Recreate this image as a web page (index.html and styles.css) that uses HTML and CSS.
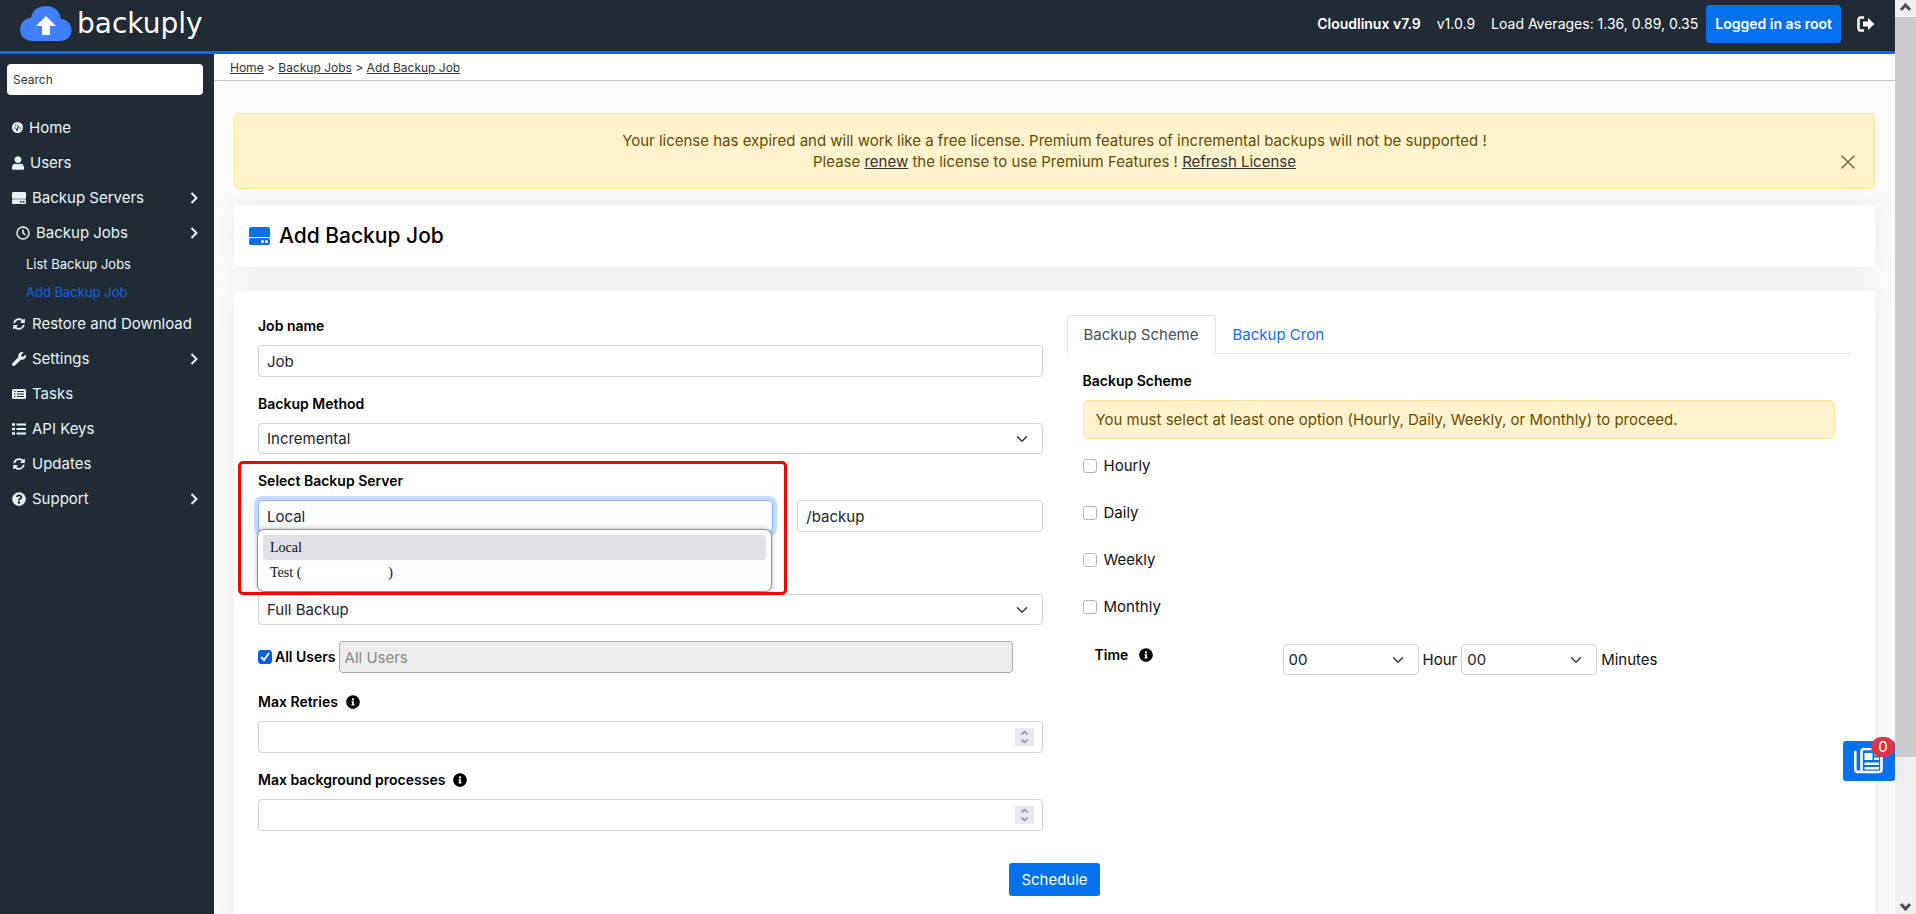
FILE: index.html
```html
<!DOCTYPE html>
<html lang="en">
<head>
  <meta charset="UTF-8">
  <meta name="viewport" content="width=device-width, initial-scale=1.0">
  <title>Backuply - Add Backup Job</title>
  <link rel="stylesheet" href="styles.css">
</head>
<body>
  <!-- shared icons -->
  <svg class="sprite" aria-hidden="true">
    <symbol id="i-sync" viewBox="0 0 512 512"><path d="M370.72 133.28C339.458 104.008 298.888 87.962 255.848 88c-77.458.068-144.328 53.178-162.791 126.85-1.344 5.363-6.122 9.15-11.651 9.15H24.103c-7.498 0-13.194-6.807-11.807-14.176C33.933 94.924 134.813 8 256 8c66.448 0 126.791 26.136 171.315 68.685L463.03 40.97C478.149 25.851 504 36.559 504 57.941V192c0 13.255-10.745 24-24 24H345.941c-21.382 0-32.09-25.851-16.971-40.971l41.75-41.749zM32 296h134.059c21.382 0 32.09 25.851 16.971 40.971l-41.75 41.75c31.262 29.273 71.835 45.319 114.876 45.28 77.418-.07 144.315-53.144 162.787-126.849 1.344-5.363 6.122-9.15 11.651-9.15h57.304c7.498 0 13.194 6.807 11.807 14.176C478.067 417.076 377.187 504 256 504c-66.448 0-126.791-26.136-171.315-68.685L48.97 471.03C33.851 486.149 8 475.441 8 454.059V320c0-13.255 10.745-24 24-24z"/></symbol>
    <symbol id="i-info" viewBox="0 0 512 512"><path d="M256 8C119.043 8 8 119.083 8 256c0 136.997 111.043 248 248 248s248-111.003 248-248C504 119.083 392.957 8 256 8zm0 110c23.196 0 42 18.804 42 42s-18.804 42-42 42-42-18.804-42-42 18.804-42 42-42zm56 254c0 6.627-5.373 12-12 12h-88c-6.627 0-12-5.373-12-12v-24c0-6.627 5.373-12 12-12h12v-64h-12c-6.627 0-12-5.373-12-12v-24c0-6.627 5.373-12 12-12h64c6.627 0 12 5.373 12 12v100h12c6.627 0 12 5.373 12 12v24z"/></symbol>
    <symbol id="i-hdd" viewBox="0 0 21 18"><path fill-rule="evenodd" d="M2 0h17a2 2 0 0 1 2 2v8H0V2a2 2 0 0 1 2-2zM2 11h17a2 2 0 0 1 2 2v3a2 2 0 0 1-2 2H2a2 2 0 0 1-2-2v-3a2 2 0 0 1 2-2zM13.500 13a1.500 1.500 0 1 0 0 3 1.500 1.500 0 0 0 0-3zM17.500 13a1.500 1.500 0 1 0 0 3 1.500 1.500 0 0 0 0-3z"/></symbol>
    <symbol id="i-chevron" viewBox="0 0 8 12"><path d="M1.500 1l5 5-5 5" fill="none" stroke="currentColor" stroke-width="2"/></symbol>
    <symbol id="i-spin" viewBox="0 0 19 18"><path d="M6.500 6.500l3-3 3 3M6.500 11.500l3 3 3-3" fill="none" stroke="#8f8f9d" stroke-width="1.500"/></symbol>
  </svg>

  <div class="window">
    <div class="app">
      <header class="topbar">
        <a class="brand" href="#">
          <svg width="52" height="36" viewBox="0 0 52 36" aria-hidden="true">
            <path fill="#4080ff" d="M12 35a11.500 11.500 0 0 1-1-23C12 4 19 0 26 0c8 0 14 5 15 13a11 11 0 0 1-1 22z"/>
            <path fill="#fff" d="M26 10l10 10h-6v9h-8v-9h-6z"/>
          </svg>
          <span>backuply</span>
        </a>
        <div class="status">
          <strong>Cloudlinux v7.9</strong>
          <span>v1.0.9</span>
          <span>Load Averages: 1.36, 0.89, 0.35</span>
        </div>
        <button type="button" class="btn user-btn">Logged in as root</button>
        <a class="logout" href="#" aria-label="Logout">
          <svg width="18" height="16" viewBox="0 0 18 16"><path d="M7 1.500H3.500a2 2 0 0 0-2 2v9a2 2 0 0 0 2 2H7" fill="none" stroke="currentColor" stroke-width="2.500"/><path fill="currentColor" d="M6 5.500h5V2l6.500 6L11 14v-3.500H6z"/></svg>
        </a>
      </header>

      <div class="body">
        <nav class="sidebar">
          <input class="search" type="text" placeholder="Search" aria-label="Search">
          <ul class="menu">
            <li><a href="#"><svg width="11" height="11" viewBox="0 0 12 12"><circle cx="6" cy="6" r="6"/><path d="M5.500 9l1.500-5" stroke="#212b36" stroke-width="1.300"/><g fill="#212b36"><circle cx="3" cy="6.500" r=".8"/><circle cx="4" cy="3.500" r=".8"/><circle cx="9" cy="6.500" r=".8"/><circle cx="5.500" cy="8.500" r="1.200"/></g></svg>Home</a></li>
            <li><a href="#"><svg width="12" height="14" viewBox="0 0 448 512"><path d="M224 256c70.7 0 128-57.3 128-128S294.7 0 224 0 96 57.3 96 128s57.3 128 128 128zm89.6 32h-16.7c-22.2 10.2-46.9 16-72.9 16s-50.6-5.8-72.9-16h-16.7C60.2 288 0 348.2 0 422.4V464c0 26.5 21.5 48 48 48h352c26.5 0 48-21.5 48-48v-41.6c0-74.2-60.2-134.4-134.4-134.4z"/></svg>Users</a></li>
            <li><a href="#"><svg width="14" height="12"><use href="#i-hdd"/></svg>Backup Servers<svg class="arrow" width="8" height="12"><use href="#i-chevron"/></svg></a></li>
            <li>
              <a class="open" href="#"><svg width="14" height="14" viewBox="0 0 14 14"><circle cx="7" cy="7" r="6" fill="none" stroke="currentColor" stroke-width="1.500"/><path d="M7 3.500V7l2.500 2" fill="none" stroke="currentColor" stroke-width="1.500"/></svg>Backup Jobs<svg class="arrow" width="8" height="12"><use href="#i-chevron"/></svg></a>
              <ul class="submenu">
                <li><a href="#">List Backup Jobs</a></li>
                <li><a class="active" href="#">Add Backup Job</a></li>
              </ul>
            </li>
            <li><a href="#"><svg width="14" height="12"><use href="#i-sync"/></svg>Restore and Download</a></li>
            <li><a href="#"><svg width="14" height="14" viewBox="0 0 512 512"><path d="M507.73 109.1c-2.24-9.03-13.54-12.09-20.12-5.51l-74.36 74.36-67.88-11.31-11.31-67.88 74.36-74.36c6.62-6.62 3.43-17.9-5.66-20.16-47.38-11.74-99.55.91-136.58 37.93-39.64 39.64-50.55 97.1-34.05 147.2L18.74 402.76c-24.99 24.99-24.99 65.51 0 90.5 24.99 24.99 65.51 24.99 90.5 0l213.21-213.21c50.12 16.71 107.47 5.68 147.37-34.22 37.07-37.07 49.7-89.32 37.91-136.73z"/></svg>Settings<svg class="arrow" width="8" height="12"><use href="#i-chevron"/></svg></a></li>
            <li><a href="#"><svg width="14" height="10" viewBox="0 0 14 10"><rect width="14" height="10" rx="1.500"/><path d="M2 2.500h1.500M5 2.500h7M2 5h1.500M5 5h7M2 7.500h1.500M5 7.500h7" stroke="#212b36" stroke-width="1"/></svg>Tasks</a></li>
            <li><a href="#"><svg width="14" height="12" viewBox="0 0 14 12"><path d="M0 1.500h3M0 6h3M0 10.500h3" stroke="currentColor" stroke-width="2.500"/><path d="M4.500 1.500H14M4.500 6H14M4.500 10.500H14" stroke="currentColor" stroke-width="1.800"/></svg>API Keys</a></li>
            <li><a href="#"><svg width="14" height="12"><use href="#i-sync"/></svg>Updates</a></li>
            <li><a href="#"><svg width="14" height="14" viewBox="0 0 512 512"><path d="M504 256c0 136.997-111.043 248-248 248S8 392.997 8 256C8 119.083 119.043 8 256 8s248 111.083 248 248zM262.655 90c-54.497 0-89.255 22.957-116.549 63.758-3.536 5.286-2.353 12.415 2.715 16.258l34.699 26.31c5.205 3.947 12.621 3.008 16.665-2.122 17.864-22.658 30.113-35.797 57.303-35.797 20.429 0 45.698 13.148 45.698 32.958 0 14.976-12.363 22.667-32.534 33.976C247.128 238.528 216 254.941 216 296v4c0 6.627 5.373 12 12 12h56c6.627 0 12-5.373 12-12v-1.333c0-28.462 83.186-29.647 83.186-106.667 0-58.002-60.165-102-116.531-102zM256 338c-25.365 0-46 20.635-46 46 0 25.364 20.635 46 46 46s46-20.636 46-46c0-25.365-20.635-46-46-46z"/></svg>Support<svg class="arrow" width="8" height="12"><use href="#i-chevron"/></svg></a></li>
          </ul>
        </nav>

        <main>
          <div class="breadcrumb"><a href="#">Home</a> &gt; <a href="#">Backup Jobs</a> &gt; <a href="#">Add Backup Job</a></div>

          <div class="content">
            <div class="alert license">
              <p>Your license has expired and will work like a free license. Premium features of incremental backups will not be supported !<br>
              Please <a href="#">renew</a> the license to use Premium Features ! <a href="#">Refresh License</a></p>
              <button type="button" class="close" aria-label="Close"><svg width="14" height="14" viewBox="0 0 14 14"><path d="M1 1l12 12M13 1L1 13" stroke="currentColor" stroke-width="1.500" stroke-linecap="round"/></svg></button>
            </div>

            <div class="card title">
              <svg width="21" height="18"><use href="#i-hdd"/></svg>
              <h1>Add Backup Job</h1>
            </div>

            <form class="card">
              <div class="columns">
                <div class="job">
                  <div class="field">
                    <label for="name">Job name</label>
                    <input class="control" type="text" id="name" value="Job">
                  </div>
                  <div class="field">
                    <label for="method">Backup Method</label>
                    <select class="control" id="method"><option>Incremental</option><option>Full</option></select>
                  </div>
                  <div class="server-row">
                    <div class="server">
                      <label for="server">Select Backup Server</label>
                      <input class="control focused" type="text" id="server" value="Local">
                      <ul class="options">
                        <li class="selected">Local</li>
                        <li>Test (<span class="masked"></span>)</li>
                      </ul>
                      <div class="marker"></div>
                    </div>
                    <input class="control" type="text" value="/backup" aria-label="Backup path">
                  </div>
                  <select class="control" aria-label="Backup type"><option>Full Backup</option></select>
                  <div class="users">
                    <input type="checkbox" id="allusers" checked>
                    <label for="allusers">All Users</label>
                    <input class="control" type="text" placeholder="All Users" aria-label="Users" disabled>
                  </div>
                  <div class="field">
                    <label for="retries">Max Retries <svg width="14" height="14"><use href="#i-info"/></svg></label>
                    <div class="number"><input class="control" type="number" id="retries"><svg width="19" height="18"><use href="#i-spin"/></svg></div>
                  </div>
                  <div class="field">
                    <label for="procs">Max background processes <svg width="14" height="14"><use href="#i-info"/></svg></label>
                    <div class="number"><input class="control" type="number" id="procs"><svg width="19" height="18"><use href="#i-spin"/></svg></div>
                  </div>
                </div>

                <div class="schedule">
                  <div class="tabs">
                    <button type="button" class="active">Backup Scheme</button>
                    <button type="button">Backup Cron</button>
                  </div>
                  <div class="scheme">
                    <h2>Backup Scheme</h2>
                    <div class="alert">You must select at least one option (Hourly, Daily, Weekly, or Monthly) to proceed.</div>
                    <label class="check"><input type="checkbox">Hourly</label>
                    <label class="check"><input type="checkbox">Daily</label>
                    <label class="check"><input type="checkbox">Weekly</label>
                    <label class="check"><input type="checkbox">Monthly</label>
                    <div class="time">
                      <label for="hour">Time <svg width="14" height="14"><use href="#i-info"/></svg></label>
                      <select class="control" id="hour"><option>00</option></select>
                      <span>Hour</span>
                      <select class="control" aria-label="Minutes"><option>00</option></select>
                      <span>Minutes</span>
                    </div>
                  </div>
                </div>
              </div>
              <button type="button" class="btn submit">Schedule</button>
            </form>
          </div>
        </main>
      </div>

      <button type="button" class="news" aria-label="News">
        <svg width="29" height="26" viewBox="0 0 29 26"><path d="M7.500 3.500a2.500 2.500 0 0 1 2.500-2.500h15a2.500 2.500 0 0 1 2.500 2.500v18A2.500 2.500 0 0 1 25 24H4a2.700 2.700 0 0 1-2.700-2.700V4M7.500 3.500V21a3 3 0 0 1-3.500 3" fill="none" stroke="#fff" stroke-width="2.600" stroke-linecap="round"/><path fill="#fff" d="M10.500 5h8v7h-8zM20 5h5v2.500h-5zM20 9.500h5V12h-5zM10.500 14.500H25V17H10.500zM10.500 19H25v2.500H10.500z"/></svg>
        <span class="badge">0</span>
      </button>
    </div>

    <div class="scrollbar" aria-hidden="true">
      <svg width="21" height="17" viewBox="0 0 21 17"><path d="M6 10l4.500-5 4.500 5" fill="none" stroke="#505050" stroke-width="3"/></svg>
      <div class="thumb"></div>
      <svg width="21" height="17" viewBox="0 0 21 17"><path d="M6 7l4.500 5 4.500-5" fill="none" stroke="#505050" stroke-width="3"/></svg>
    </div>
  </div>
</body>
</html>
```
FILE: styles.css
```css
:root {
  --dark: #212b36;
  --blue: #0571ef;
  --border: #ced4da;
  --warn: #fff3cd;
}

* {
  margin: 0;
  padding: 0;
  box-sizing: border-box;
}

body {
  font-family: Inter, "Open Sans", sans-serif;
  font-size: 15px;
  line-height: 21px;
  color: #111;
  background: #fcfcfc;
}

ul {
  list-style: none;
}

input, select, button {
  font: inherit;
  color: inherit;
}

svg {
  fill: currentColor;
  flex: none;
}

.sprite {
  position: absolute;
  width: 0;
  height: 0;
}

.window {
  display: flex;
  height: 100vh;
  overflow: hidden;
}

.app {
  flex: 1;
  min-width: 0;
  display: flex;
  flex-direction: column;
  position: relative;
}

.btn {
  border: 0;
  border-radius: 3px;
  background: var(--blue);
  color: #fff;
}

/* top bar */
.topbar {
  display: flex;
  align-items: center;
  height: 54px;
  flex: none;
  padding: 0 20px 4px;
  background: var(--dark);
  border-bottom: 3px solid var(--blue);
  color: #fff;
  font-size: 14px;
}

.brand {
  display: flex;
  align-items: center;
  gap: 5px;
  color: #fff;
  font-family: "DejaVu Sans", sans-serif;
  font-size: 28px;
  line-height: 36px;
  text-decoration: none;
}

.status {
  display: flex;
  gap: 16px;
  margin-left: auto;
}

.status strong {
  font-weight: 600;
}

.user-btn {
  margin: 0 16px 0 8px;
  padding: 0 9px;
  height: 38px;
  border-radius: 4px;
  font-weight: 600;
}

.logout {
  display: flex;
  color: #fff;
}

.body {
  flex: 1;
  min-height: 0;
  display: flex;
}

/* sidebar */
.sidebar {
  width: 214px;
  flex: none;
  padding: 10px 11px 0 7px;
  background: var(--dark);
  color: #e6f3f5;
}

.search {
  display: block;
  width: 100%;
  height: 31px;
  padding: 0 6px;
  border: 0;
  border-radius: 4px;
  background: #fff;
  color: #222;
  font-size: 12px;
}

.search::placeholder {
  color: #333;
}

.menu {
  margin-top: 15px;
}

.menu a {
  display: flex;
  align-items: center;
  gap: 6px;
  height: 35px;
  padding: 0 5px;
  color: inherit;
  text-decoration: none;
  white-space: nowrap;
}

.menu a.open {
  padding-left: 9px;
}

.menu .arrow {
  margin-left: auto;
}

.menu .submenu a {
  height: 28px;
  padding-left: 19px;
  font-size: 13px;
}

.menu .submenu a.active {
  color: #0d63e0;
}

/* main area */
main {
  flex: 1;
  min-width: 0;
  overflow: hidden;
}

.breadcrumb {
  height: 27px;
  padding: 3px 16px;
  border-bottom: 1px solid #c6c6c6;
  background: #fff;
  font-size: 12px;
}

.breadcrumb a,
.license a {
  color: #333;
}

.content {
  padding: 32px 20px 40px;
}

.alert {
  padding: 8px 12px;
  border: 1px solid #ffe69c;
  border-radius: 4px;
  background: var(--warn);
  color: #664d03;
}

.license {
  display: flex;
  align-items: center;
  padding: 16px 18px;
  height: 76px;
  text-align: center;
}

.license p {
  flex: 1;
  padding-left: 32px;
}

.close {
  align-self: flex-end;
  display: flex;
  padding: 3px 1px;
  margin-left: 16px;
  border: 0;
  background: none;
  color: #6e684f;
}

.card {
  background: #fff;
  box-shadow: 0 0 32px rgba(0, 0, 0, 0.08);
}

.title {
  display: flex;
  align-items: center;
  gap: 9px;
  height: 62px;
  margin: 16px 0 24px;
  padding: 0 15px;
  color: var(--blue);
}

.title h1 {
  color: #000;
  font-size: 21px;
  line-height: 24px;
  font-weight: 500;
}

/* form */
form.card {
  padding: 24px 24px 48px;
}

.columns {
  display: grid;
  grid-template-columns: 1fr 1fr;
  gap: 24px;
}

.job,
.field,
.server {
  display: flex;
  flex-direction: column;
}

.job {
  gap: 16px;
}

.field,
.server {
  gap: 8px;
}

.job label,
.time label,
.scheme h2 {
  display: flex;
  align-items: center;
  gap: 8px;
  color: #000;
  font-size: 14px;
  font-weight: 600;
  line-height: 22px;
}

.control {
  width: 100%;
  height: 32px;
  padding: 0 8px;
  border: 1px solid var(--border);
  border-radius: 4px;
  background: #fff;
  color: #212529;
}

select.control {
  height: 31px;
  appearance: none;
  background: #fff url("data:image/svg+xml,%3Csvg xmlns='http://www.w3.org/2000/svg' viewBox='0 0 16 16'%3E%3Cpath fill='none' stroke='%23343a40' stroke-linecap='round' stroke-width='2' d='M2 5l6 6 6-6'/%3E%3C/svg%3E") no-repeat right 14px center / 12px 12px;
}

.server-row {
  display: grid;
  grid-template-columns: 515fr 245fr;
  gap: 24px;
  align-items: end;
  margin-bottom: 46px;
}

.server {
  position: relative;
}

.focused {
  border-color: #86b7fe;
  background: #fbfcfe;
  box-shadow: 0 0 0 4px #c2dbfe;
  outline: 0;
}

.options {
  position: absolute;
  z-index: 1;
  top: 59px;
  left: -1px;
  right: 1px;
  height: 63px;
  padding: 5px;
  border: 1px solid #8f8f9d;
  border-radius: 7px;
  background: #fbfcfe;
  box-shadow: 0 0 5px rgba(0, 0, 0, 0.3);
  font-family: "Liberation Serif", serif;
  font-size: 14px;
  line-height: 25px;
}

.options li {
  display: flex;
  padding: 0 7px;
  border-radius: 4px;
}

.options .selected {
  background: #e0e0e6;
}

.masked {
  width: 87px;
  margin: 6px 0;
  background: #fff;
}

.marker {
  position: absolute;
  z-index: 2;
  top: -9px;
  left: -20px;
  right: -14px;
  height: 134px;
  border: 3px solid #f00;
  border-radius: 5px;
  pointer-events: none;
}

.users {
  display: flex;
  align-items: center;
  gap: 3px;
  margin-bottom: 2px;
}

input[type="checkbox"] {
  width: 14px;
  height: 14px;
  flex: none;
  appearance: none;
  border: 1px solid #b4b4b4;
  border-radius: 3px;
  background: #fff;
}

input[type="checkbox"]:checked {
  border-color: #0060df;
  background: #0060df url("data:image/svg+xml,%3Csvg xmlns='http://www.w3.org/2000/svg' viewBox='0 0 12 12'%3E%3Cpath fill='none' stroke='%23fff' stroke-width='2' d='M2 6l3 3 5-7'/%3E%3C/svg%3E");
}

.users .control {
  width: 86%;
  padding: 0 5px;
  border-color: #a9a9a9;
  background: #ededed;
}

.users .control::placeholder {
  color: #8a8a8a;
}

.number {
  position: relative;
}

.number svg {
  position: absolute;
  top: 7px;
  right: 9px;
  background: #e9e9ed;
}

.number input {
  display: block;
  appearance: textfield;
}

.number input::-webkit-inner-spin-button {
  appearance: none;
}

/* schedule tabs */
.tabs {
  display: flex;
  border-bottom: 1px solid #dee2e6;
}

.tabs button {
  height: 39px;
  margin-bottom: -1px;
  padding: 0 16px;
  border: 1px solid transparent;
  border-radius: 4px 4px 0 0;
  background: none;
  color: #0d6efd;
}

.tabs .active {
  border-color: #dee2e6 #dee2e6 #fff;
  background: #fff;
  color: #495057;
}

.scheme {
  padding: 16px;
}

.scheme .alert {
  margin: 8px 0 15px;
}

.check {
  display: flex;
  align-items: center;
  gap: 7px;
  height: 23px;
  margin-bottom: 24px;
}

.time {
  display: grid;
  grid-template-columns: 184px 136px auto 136px auto;
  justify-content: start;
  align-items: center;
  column-gap: 4px;
  margin-top: 26px;
  padding-left: 12px;
}

.time label {
  gap: 11px;
  align-self: start;
}

.time .control {
  padding: 0 5px;
}

.submit {
  display: block;
  height: 33px;
  margin: 32px auto 0;
  padding: 0 12px;
}

/* floating news button */
.news {
  position: absolute;
  right: 0;
  bottom: 133px;
  display: flex;
  padding: 7px 12px 7px 11px;
  border: 0;
  border-radius: 3px;
  background: var(--blue);
}

.badge {
  position: absolute;
  top: -4px;
  right: 0;
  width: 24px;
  border-radius: 10px;
  background: #dc3545;
  color: #fff;
  line-height: 20px;
}

.scrollbar {
  width: 21px;
  flex: none;
  display: flex;
  flex-direction: column;
  background: #f0f0f0;
}

.thumb {
  height: 81%;
  margin-bottom: auto;
  background: #cdcdcd;
}
```
